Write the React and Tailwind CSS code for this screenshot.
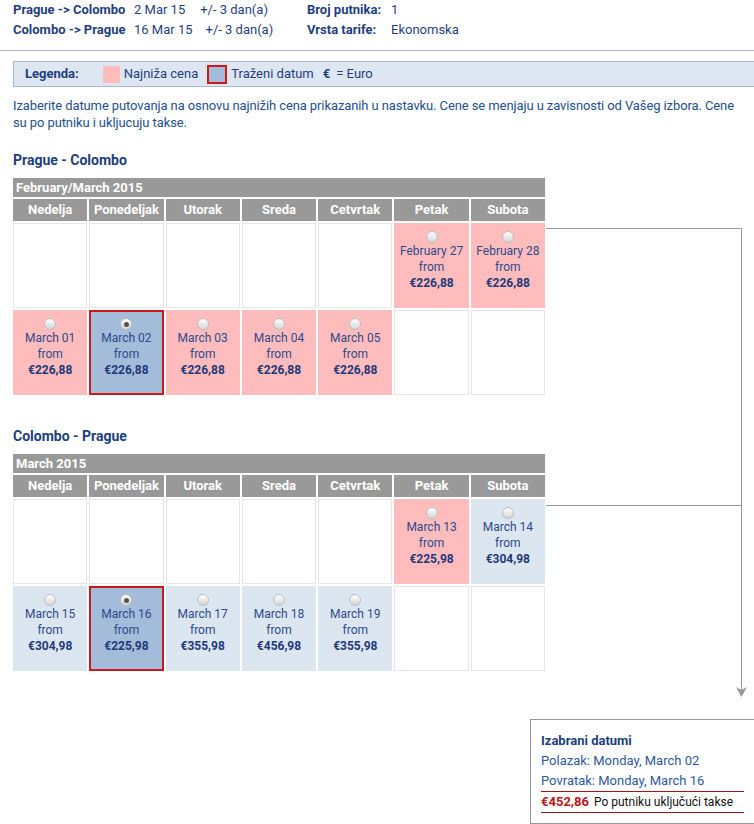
import React from 'react';

const febMar = [
  [null, null, null, null, null, { d: 'February 27', p: '€226,88', t: 'low' }, { d: 'February 28', p: '€226,88', t: 'low' }],
  [
    { d: 'March 01', p: '€226,88', t: 'low' },
    { d: 'March 02', p: '€226,88', t: 'sel', checked: true },
    { d: 'March 03', p: '€226,88', t: 'low' },
    { d: 'March 04', p: '€226,88', t: 'low' },
    { d: 'March 05', p: '€226,88', t: 'low' },
    null,
    null,
  ],
];

const mar = [
  [null, null, null, null, null, { d: 'March 13', p: '€225,98', t: 'low' }, { d: 'March 14', p: '€304,98', t: 'norm' }],
  [
    { d: 'March 15', p: '€304,98', t: 'norm' },
    { d: 'March 16', p: '€225,98', t: 'sel', checked: true },
    { d: 'March 17', p: '€355,98', t: 'norm' },
    { d: 'March 18', p: '€456,98', t: 'norm' },
    { d: 'March 19', p: '€355,98', t: 'norm' },
    null,
    null,
  ],
];

const dani = ['Nedelja', 'Ponedeljak', 'Utorak', 'Sreda', 'Cetvrtak', 'Petak', 'Subota'];

function Radio({ checked }) {
  return (
    <span className="flex h-[12px] w-[12px] items-center justify-center rounded-full border border-[#bdbdbd] bg-gradient-to-b from-[#fdfdfd] to-[#d6d6d6]">
      {checked && <span className="h-[5px] w-[5px] rounded-full bg-[#555]" />}
    </span>
  );
}

function Cell({ c }) {
  if (!c) return <div className="h-[85px] border border-[#e6e6e6] bg-white" />;
  const boja =
    c.t === 'low'
      ? 'bg-[#ffbcbd] pt-[8px]'
      : c.t === 'sel'
      ? 'bg-[#a3bcda] border-2 border-[#d01818] pt-[6px]'
      : 'bg-[#dce6f1] pt-[8px]';
  return (
    <div className={`flex h-[85px] flex-col items-center text-[12px] leading-[16px] text-[#2d4a8c] ${boja}`}>
      <Radio checked={c.checked} />
      <span>{c.d}</span>
      <span>from</span>
      <span className="font-bold text-[#1f3a7a]">{c.p}</span>
    </div>
  );
}

function Kalendar({ naslov, mesec, redovi }) {
  return (
    <div className="flex flex-col">
      <h2 className="mt-[9px] text-[14px] font-bold leading-[20px] text-[#1c3f7d]">{naslov}</h2>
      <div className="mt-[8px] w-[532px]">
        <div className="h-[19px] bg-[#999] pl-[3px] text-[13px] font-bold leading-[19px] text-white">{mesec}</div>
        <div className="mt-[2px] grid grid-cols-7 gap-[2px]">
          {dani.map(d => (
            <div key={d} className="h-[22px] bg-[#999] text-center text-[13px] font-bold leading-[22px] text-white">
              {d}
            </div>
          ))}
          {redovi.flat().map((c, i) => (
            <Cell key={i} c={c} />
          ))}
        </div>
      </div>
    </div>
  );
}

export default function App() {
  return (
    <div className="relative h-[824px] w-[754px] overflow-hidden bg-white font-['Roboto',sans-serif] text-[13px] text-[#1f3f7f]">
      <div className="border-b border-[#aab3c2] pb-[10px] pl-[13px]">
        <div className="flex leading-[20px]">
          <div className="flex w-[294px]">
            <span className="w-[121px] font-bold">Prague -&gt; Colombo</span>
            <span>2 Mar 15</span>
            <span className="ml-[15px]">+/- 3 dan(a)</span>
          </div>
          <span className="w-[84px] font-bold">Broj putnika:</span>
          <span>1</span>
        </div>
        <div className="flex leading-[20px]">
          <div className="flex w-[294px]">
            <span className="w-[121px] font-bold">Colombo -&gt; Prague</span>
            <span>16 Mar 15</span>
            <span className="ml-[13px]">+/- 3 dan(a)</span>
          </div>
          <span className="w-[84px] font-bold">Vrsta tarife:</span>
          <span>Ekonomska</span>
        </div>
      </div>

      <div className="ml-[13px] mt-[10px] flex h-[26px] w-[745px] items-center border border-[#a9b9cc] bg-[#dde6f1] pl-[11px]">
        <span className="font-bold">Legenda:</span>
        <span className="ml-[24px] h-[17px] w-[17px] bg-[#ffbcbd]" />
        <span className="ml-[4px]">Najniža cena</span>
        <span className="ml-[9px] h-[19px] w-[20px] border-2 border-[#d01818] bg-[#a3bcda]" />
        <span className="ml-[4px]">Traženi datum</span>
        <span className="ml-[9px] font-bold">€</span>
        <span className="ml-[6px]">= Euro</span>
      </div>

      <div className="flex flex-col px-[13px]">
        <p className="mt-[10px] text-[13px] leading-[17px] tracking-[-0.1px] text-[#24508f]">
          Izaberite datume putovanja na osnovu najnižih cena prikazanih u nastavku. Cene se menjaju u zavisnosti od Vašeg izbora. Cene su po putniku i ukljucuju takse.
        </p>
        <div className="mt-[10px]">
          <Kalendar naslov="Prague - Colombo" mesec="February/March 2015" redovi={febMar} />
        </div>
        <div className="mt-[22px]">
          <Kalendar naslov="Colombo - Prague" mesec="March 2015" redovi={mar} />
        </div>
      </div>

      {/* linija ka sazetku */}
      <div className="absolute left-[546px] top-[228px] h-px w-[196px] bg-[#999]" />
      <div className="absolute left-[546px] top-[505px] h-px w-[196px] bg-[#999]" />
      <div className="absolute left-[741px] top-[228px] h-[462px] w-px bg-[#999]" />
      <svg className="absolute left-[736px] top-[687px]" width="11" height="10" viewBox="0 0 11 10">
        <path d="M0 0 L5.5 10 L11 0 L5.5 3 Z" fill="#999" />
      </svg>

      <div className="absolute left-[530px] top-[719px] w-[230px] border border-[#999] bg-white pb-[10px] pl-[10px] pr-[15px] pt-[11px] leading-[20px]">
        <div className="font-bold text-[#1c3f7d]">Izabrani datumi</div>
        <div className="text-[#2f5a9e]">Polazak: Monday, March 02</div>
        <div className="border-b border-[#a31515] text-[#2f5a9e]">Povratak: Monday, March 16</div>
        <div className="border-b border-[#a31515] text-[12px] text-[#111]">
          <span className="text-[13px] font-bold text-[#c0141a]">€452,86</span>
          <span className="ml-[5px]">Po putniku uključući takse</span>
        </div>
      </div>
    </div>
  );
}
